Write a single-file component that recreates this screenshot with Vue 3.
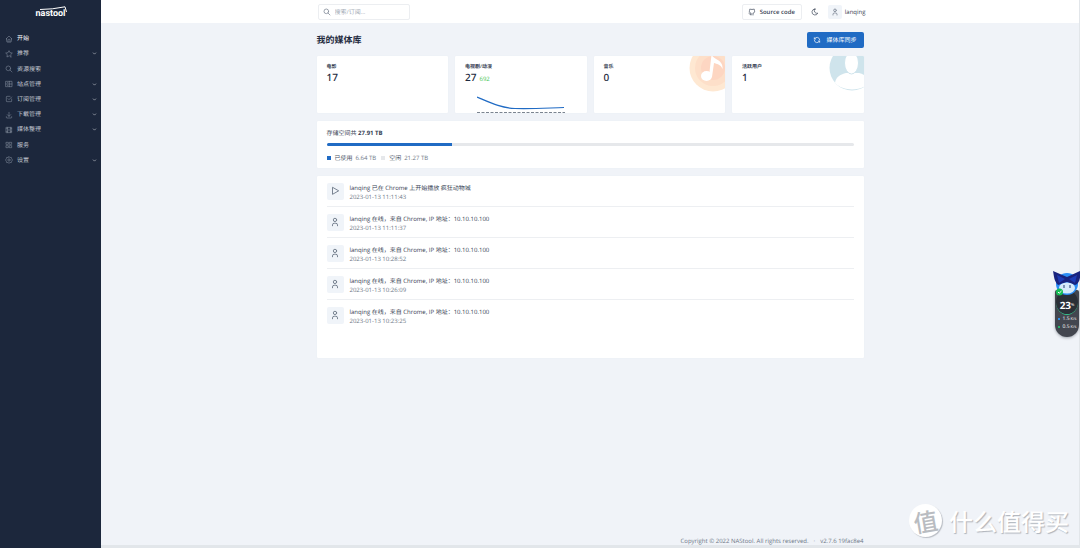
<script setup>
import { ref } from 'vue'

const icons = {
  home: ['M5 12H3l9-9 9 9h-2', 'M5 12v7a2 2 0 0 0 2 2h10a2 2 0 0 0 2-2v-7', 'M9 21v-6a2 2 0 0 1 2-2h2a2 2 0 0 1 2 2v6'],
  star: ['M12 17.8l-6.2 3.2 1.2-6.9-5-4.9 6.9-1L12 2l3.1 6.2 6.9 1-5 4.9 1.2 6.9z'],
  search: ['M17 10a7 7 0 1 1-14 0 7 7 0 0 1 14 0', 'M21 21l-6-6'],
  server: ['M3 4h18v16H3z', 'M3 12h18', 'M13 4v16', 'M7 8h2', 'M7 16h2'],
  checkbox: ['M9 11l3 3 8-8', 'M20 12v6a2 2 0 0 1-2 2H6a2 2 0 0 1-2-2V6a2 2 0 0 1 2-2h9'],
  download: ['M4 17v2a2 2 0 0 0 2 2h12a2 2 0 0 0 2-2v-2', 'M7 11l5 5 5-5', 'M12 4v12'],
  movie: ['M4 4h16v16H4z', 'M8 4v16', 'M16 4v16', 'M8 12h8', 'M4 8h4', 'M4 16h4', 'M16 8h4', 'M16 16h4'],
  apps: ['M4 4h6v6H4z', 'M14 4h6v6h-6z', 'M4 14h6v6H4z', 'M14 14h6v6h-6z'],
  settings: ['M12 2l3 2.5 4-.2 1 4 2.500 3.700-2.500 3.700-1 4-4-.2-3 2.500-3-2.500-4 .2-1-4L1.500 12 4 8.300l1-4 4 .2z', 'M15.500 12a3.500 3.500 0 1 1-7 0 3.500 3.500 0 0 1 7 0'],
  chevron: ['M6 9l6 6 6-6'],
  user: ['M16 7a4 4 0 1 1-8 0 4 4 0 0 1 8 0', 'M6 21v-2a4 4 0 0 1 4-4h4a4 4 0 0 1 4 4v2'],
  play: ['M6 4v16l14-8z'],
  moon: ['M12 3h.4a7.500 7.500 0 0 0 7.900 12.400A9 9 0 1 1 12 3z'],
  refresh: ['M20 11A8.100 8.100 0 0 0 4.500 9M4 5v4h4', 'M4 13a8.100 8.100 0 0 0 15.500 2m.5 4v-4h-4'],
  github: ['M9 19c-4.300 1.400-4.300-2.500-6-3m12 5v-3.500c0-1 .1-1.400-.5-2 2.800-.3 5.500-1.400 5.500-6a4.600 4.600 0 0 0-1.300-3.200 4.200 4.200 0 0 0-.1-3.200s-1.100-.3-3.500 1.300a12.300 12.300 0 0 0-6.200 0C6.500 2.800 5.400 3.100 5.400 3.100a4.200 4.200 0 0 0-.1 3.200A4.600 4.600 0 0 0 4 9.500c0 4.600 2.700 5.700 5.500 6-.6.6-.6 1.200-.5 2V21']
}

const menu = [
  { icon: 'home', label: '开始', active: true },
  { icon: 'star', label: '推荐', more: true },
  { icon: 'search', label: '资源搜索' },
  { icon: 'server', label: '站点管理', more: true },
  { icon: 'checkbox', label: '订阅管理', more: true },
  { icon: 'download', label: '下载管理', more: true },
  { icon: 'movie', label: '媒体整理', more: true },
  { icon: 'apps', label: '服务' },
  { icon: 'settings', label: '设置', more: true }
]

const stats = [
  { label: '电影', value: 17 },
  { label: '电视剧/动漫', value: 27, extra: 692, art: 'chart' },
  { label: '音乐', value: 0, art: 'music' },
  { label: '活跃用户', value: 1, art: 'people' }
]

const used = 6.64
const total = 27.91

const activity = [
  { icon: 'play', text: 'lanqing 已在 Chrome 上开始播放 疯狂动物城', time: '2023-01-13 11:11:43' },
  { icon: 'user', text: 'lanqing 在线，来自 Chrome, IP 地址：10.10.10.100', time: '2023-01-13 11:11:37' },
  { icon: 'user', text: 'lanqing 在线，来自 Chrome, IP 地址：10.10.10.100', time: '2023-01-13 10:28:52' },
  { icon: 'user', text: 'lanqing 在线，来自 Chrome, IP 地址：10.10.10.100', time: '2023-01-13 10:26:09' },
  { icon: 'user', text: 'lanqing 在线，来自 Chrome, IP 地址：10.10.10.100', time: '2023-01-13 10:23:25' }
]

const keyword = ref('')
</script>

<template>
  <div class="app">
    <aside class="sidebar">
      <a class="brand" href="#" aria-label="nastool">
        <span>nastool</span>
        <svg class="swoosh" viewBox="0 0 34 8" aria-hidden="true"><path d="M6 3.500Q18 3.500 31 .8L32.500 6" /></svg>
      </a>
      <nav class="menu">
        <a v-for="m in menu" :key="m.label" href="#" :class="{ active: m.active }">
          <svg class="icon" viewBox="0 0 24 24"><path v-for="d in icons[m.icon]" :key="d" :d="d" /></svg>
          <span>{{ m.label }}</span>
          <svg v-if="m.more" class="icon chevron" viewBox="0 0 24 24"><path :d="icons.chevron[0]" /></svg>
        </a>
      </nav>
    </aside>

    <div class="page">
      <header class="topbar">
        <div class="container bar">
          <label class="search">
            <svg class="icon" viewBox="0 0 24 24"><path v-for="d in icons.search" :key="d" :d="d" /></svg>
            <input v-model="keyword" type="text" placeholder="搜索/订阅..." aria-label="搜索/订阅" />
          </label>
          <div class="tools">
            <a class="source" href="#">
              <svg class="icon" viewBox="0 0 24 24"><path :d="icons.github[0]" /></svg>
              <span>Source code</span>
            </a>
            <button class="theme" type="button" aria-label="切换主题">
              <svg class="icon" viewBox="0 0 24 24"><path :d="icons.moon[0]" /></svg>
            </button>
            <a class="account" href="#">
              <span class="avatar small"><svg class="icon" viewBox="0 0 24 24"><path v-for="d in icons.user" :key="d" :d="d" /></svg></span>
              <span class="name">lanqing</span>
            </a>
          </div>
        </div>
      </header>

      <main class="container content">
        <div class="heading">
          <h1>我的媒体库</h1>
          <button class="sync" type="button">
            <svg class="icon" viewBox="0 0 24 24"><path v-for="d in icons.refresh" :key="d" :d="d" /></svg>
            <span>媒体库同步</span>
          </button>
        </div>

        <section class="stats">
          <article v-for="s in stats" :key="s.label" class="card stat">
            <h2>{{ s.label }}</h2>
            <p><strong>{{ s.value }}</strong><span v-if="s.extra">{{ s.extra }}</span></p>
            <svg v-if="s.art === 'chart'" class="chart" viewBox="0 0 88 20">
              <path d="M0 3C14 9 24 14 38 14.500C56 15 70 14 87 13.500" fill="none" stroke="#206bc4" stroke-width="1.200" />
              <path d="M0 18.500H88" stroke="#7b8490" stroke-dasharray="3 1.500" />
            </svg>
            <svg v-if="s.art === 'music'" class="art" viewBox="0 0 36 36">
              <circle cx="24" cy="12" r="23.500" fill="#fee8d2" />
              <circle cx="24" cy="12" r="18" fill="#fddfc9" />
              <circle cx="24" cy="12" r="12" fill="#fdd6c2" />
              <ellipse cx="17.500" cy="20" rx="5.500" ry="5" fill="#fff" />
              <path d="M20 20L22.500-1c3 5 12 5 11 14-2-5-6-5-8.500-6L23 21z" fill="#fff" />
            </svg>
            <svg v-if="s.art === 'people'" class="art" viewBox="0 0 36 36">
              <circle cx="24" cy="12" r="22.500" fill="#cfe4ec" />
              <path d="M7 27C8 20 13 18.500 18 17h13c5 1.500 9 3 10 10C33 35.500 15 35.500 7 27z" fill="#fff" />
              <ellipse cx="23.500" cy="7" rx="7" ry="11" fill="#fff" stroke="#cfe4ec" />
            </svg>
          </article>
        </section>

        <section class="card storage">
          <p class="total">存储空间共 <strong>{{ total }} TB</strong></p>
          <div class="track"><div class="fill" :style="{ width: (used / total * 100) + '%' }"></div></div>
          <div class="legend">
            <span class="dot used"></span><span>已使用</span><span class="amount">6.64 TB</span>
            <span class="dot"></span><span>空闲</span><span class="amount">21.27 TB</span>
          </div>
        </section>

        <section class="card activity">
          <ul>
            <li v-for="a in activity" :key="a.time">
              <span class="avatar"><svg class="icon" viewBox="0 0 24 24"><path v-for="d in icons[a.icon]" :key="d" :d="d" /></svg></span>
              <div class="entry">
                <p>{{ a.text }}</p>
                <time>{{ a.time }}</time>
              </div>
            </li>
          </ul>
        </section>
      </main>

      <footer class="container footer">
        <span>Copyright © 2022 NAStool. All rights reserved.</span><span>·</span><span>v2.7.6 19fac8e4</span>
      </footer>
    </div>

    <div class="monitor">
      <svg class="pet" viewBox="0 0 28 26">
        <circle cx="14" cy="14" r="11" fill="#2b8df5" />
        <path d="M0 1l14 6L27 1c1 7-1 13-5 14l-8-3-9 3C1 11 1 6 0 1z" fill="#19237e" />
        <path d="M4 5l8 4-6 4zM24 5l-8 4 6 4z" fill="#1d3bb5" />
        <ellipse cx="14" cy="18" rx="8" ry="5.500" fill="#d7ebfb" />
        <path d="M11 15v3M17 15v3" stroke="#253c70" />
        <circle cx="6.500" cy="22" r="3.500" fill="#16bd55" />
        <path d="M5 22l1.200 1.200L8.500 21" fill="none" stroke="#fff" />
      </svg>
      <div class="pill">
        <div class="gauge"><b>23</b><small>%</small></div>
        <div class="speed up">1.5<small>K/s</small></div>
        <div class="speed down">0.5<small>K/s</small></div>
      </div>
    </div>

    <div class="watermark"><span class="seal"><i>值</i></span><span>什么值得买</span></div>
  </div>
</template>

<style>
body { margin: 0; background: #f0f3f8; }
</style>

<style scoped>
* { box-sizing: border-box; }
.app {
  display: flex;
  min-height: 100vh;
  position: relative;
  overflow: hidden;
  background: #f0f3f8;
  color: #354052;
  font: 6px/9px "Open Sans", "Noto Sans CJK SC", sans-serif;
  text-rendering: geometricPrecision;
}
h1, h2, p, ul { margin: 0; padding: 0; }
a { color: inherit; text-decoration: none; }
button, input { font: inherit; color: inherit; text-rendering: inherit; }
.icon {
  width: 8px;
  height: 8px;
  flex: none;
  fill: none;
  stroke: currentColor;
  stroke-width: 2;
  stroke-linecap: round;
  stroke-linejoin: round;
}

.sidebar { width: 101px; flex: none; background: #1c273c; color: #c3c8d1; }
.brand {
  display: block;
  position: relative;
  height: 31px;
  padding-top: 9px;
  text-align: center;
  color: #fff;
  font: bold 9px/10px Roboto, sans-serif;
}
.swoosh { position: absolute; left: 34px; top: 6px; width: 34px; height: 8px; fill: none; stroke: #fff; }
.menu { display: grid; grid-auto-rows: 1fr; height: 137px; }
.menu a { display: flex; align-items: center; gap: 4px; padding: 0 4px 0 5px; }
.menu .active { color: #fff; }
.menu .icon { stroke: #8f98a8; stroke-width: 1.5; }
.menu .chevron { width: 5px; height: 5px; margin-left: auto; stroke: #c3c8d1; stroke-width: 3; }

.page {
  flex: 1;
  min-width: 0;
  display: flex;
  flex-direction: column;
  border-right: 1px solid #e2e6ea;
  border-bottom: 3px solid #e2e6ea;
}
.container { width: 100%; max-width: 547px; margin: 0 auto; }
.topbar { background: #fff; }
.bar { display: flex; justify-content: space-between; align-items: center; height: 23px; padding-left: 1px; }
.search {
  display: flex;
  align-items: center;
  gap: 4px;
  width: 92px;
  height: 16px;
  padding: 0 4px;
  border: 1px solid #eceef1;
  border-radius: 2px;
  color: #6d7786;
}
.search input { min-width: 0; flex: 1; border: 0; padding: 2px 0 0; outline: 0; background: none; }
.search input::placeholder { color: #a4abb6; opacity: 1; }
.tools { display: flex; align-items: center; margin-right: -2px; }
.source {
  display: flex;
  align-items: center;
  gap: 4px;
  height: 16px;
  padding: 0 6px 0 5px;
  border: 1px solid #eceef1;
  border-radius: 2px;
  font-weight: 600;
}
.source span, .name { padding-top: 2px; }
.theme { display: flex; margin: 0 9px; padding: 0; border: 0; background: none; }
.account { display: flex; align-items: center; gap: 3px; }
.avatar {
  display: flex;
  align-items: center;
  justify-content: center;
  flex: none;
  width: 17px;
  height: 17px;
  border-radius: 2px;
  background: #f0f4f9;
  color: #626d7d;
}
.avatar .icon { width: 10px; height: 10px; }
.avatar.small { width: 14px; height: 14px; }
.avatar.small .icon { width: 8px; height: 8px; }

.heading { display: flex; justify-content: space-between; align-items: center; padding: 9px 0 8px; }
h1 { color: #1f2b40; font-size: 9px; line-height: 16px; }
.sync {
  display: flex;
  align-items: center;
  gap: 5px;
  height: 16px;
  padding: 0 7px 0 6px;
  border: 0;
  border-radius: 2px;
  background: #206bc4;
  color: #fff;
}
.card { border-radius: 1px; background: #fff; box-shadow: 0 0 1px #e2e7ed; }
.stats { display: grid; grid-template-columns: repeat(4, 1fr); gap: 7px; }
.stat { position: relative; overflow: hidden; height: 57px; padding: 8px 10px; }
h2 { font-size: 5px; line-height: 7px; font-weight: 600; }
.stat p { display: flex; align-items: baseline; gap: 3px; line-height: 13px; }
.stat strong { font: 500 10px/13px "Noto Sans", sans-serif; color: #1f2b40; }
.stat p span { color: #3fc553; }
.chart { position: absolute; left: 22px; bottom: -1px; width: 88px; height: 20px; }
.art { position: absolute; right: 0; top: 0; width: 36px; height: 36px; }

.storage { margin-top: 8px; padding: 8px 10px 7px; }
.track { height: 3px; margin: 5px 0 9px; border-radius: 2px; background: #e6e8eb; overflow: hidden; }
.fill { height: 100%; background: #206bc4; }
.legend { display: flex; align-items: center; color: #4a5566; line-height: 6px; }
.dot { width: 4px; height: 4px; margin-right: 4px; background: #e6e8eb; }
.dot.used { background: #206bc4; }
.amount { margin: 0 5px 0 3px; color: #6d7786; }

.activity { margin-top: 8px; padding: 0 10px 27px; }
.activity ul { list-style: none; }
li { display: flex; align-items: center; gap: 6px; height: 31px; border-bottom: 1px solid #edeff2; }
li:last-child { border-bottom-color: transparent; }
.entry { padding-top: 3px; }
time { display: block; color: #6d7786; }

.footer { display: flex; justify-content: flex-end; gap: 5px; margin-top: auto; color: #6d7786; line-height: 8px; }

.monitor { position: absolute; right: 0; top: 270px; width: 27px; }
.pet { position: absolute; left: 0; top: 0; width: 28px; height: 26px; z-index: 1; }
.pill {
  margin: 20px 1px 0 2px;
  height: 47px;
  border-radius: 2px 2px 12px 12px;
  background: #43464f;
  color: #fff;
  box-shadow: 0 1px 3px #a0a5ad;
}
.gauge {
  display: flex;
  align-items: center;
  justify-content: center;
  width: 22px;
  height: 25px;
  margin: 0 auto;
  padding-top: 6px;
  border-radius: 50%;
  border-bottom: 1px solid #35c58c;
  background: #2b2f37;
  font-size: 10px;
}
.pill small { font-size: 4px; }
.speed { display: flex; align-items: center; justify-content: center; gap: 1px; height: 8px; font-size: 5px; }
.speed::before { content: ""; width: 2px; height: 2px; margin-right: 2px; background: #2d8de8; }
.speed.down::before { background: #27b36a; }

.watermark {
  position: absolute;
  right: 11px;
  bottom: 11px;
  display: flex;
  align-items: center;
  gap: 7px;
  color: #fff;
  font: 500 24px/33px "Noto Sans CJK SC", sans-serif;
  text-shadow: 1px 1px 1px #aeb3ba;
}
.seal {
  width: 33px;
  height: 33px;
  border-radius: 50%;
  background: #fff;
  color: #b9bcc1;
  text-align: center;
  text-shadow: none;
  box-shadow: 1px 1px 1px #b9bdc4;
}
.seal i { display: block; transform: rotate(-10deg); font-style: normal; }
</style>
